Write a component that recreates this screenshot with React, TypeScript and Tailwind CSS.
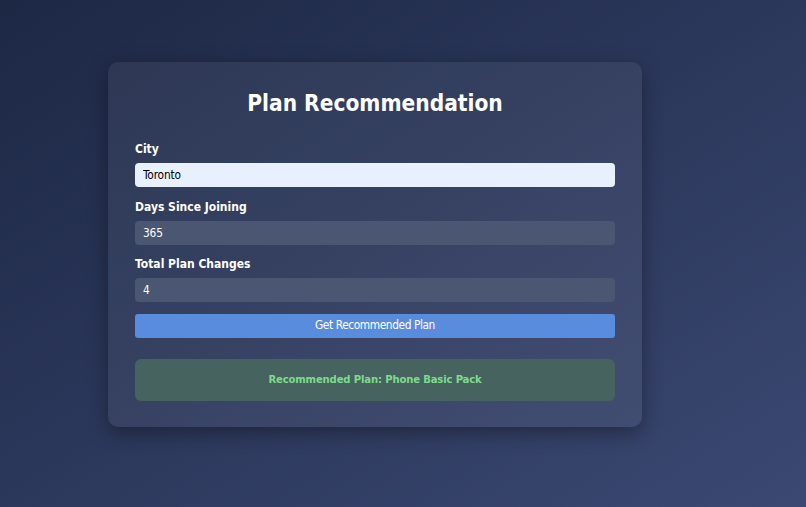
import { useState } from 'react'

/* Plan recommendation form card */

const fieldFont = { fontFamily: '"DejaVu Sans Condensed", "DejaVu Sans", sans-serif' }

export default function App() {
  const [city, setCity] = useState('Toronto')
  const [days, setDays] = useState('365')
  const [changes, setChanges] = useState('4')

  return (
    <div
      className="min-h-screen w-full bg-gradient-to-br from-[#1d2845] to-[#3b4872] pt-[62px] pl-[108px]"
      style={{ fontFamily: '"DejaVu Sans Condensed", "DejaVu Sans", Verdana, sans-serif' }}
    >
      <div className="w-[534px] rounded-[10px] bg-white/[0.06] px-[27px] pt-[27px] pb-[26px] shadow-[0_6px_20px_rgba(0,0,0,0.35)]">
        <h1 className="mb-[25px] text-center text-[22.5px] font-bold leading-[28px] text-white">
          Plan Recommendation
        </h1>

        <label className="mb-[6px] block text-[12px] font-bold leading-[15px] text-white">City</label>
        <input
          value={city}
          onChange={(e) => setCity(e.target.value)}
          className="mb-[12.5px] block h-[24px] w-full rounded-[4px] bg-[#e8f0fe] px-[8px] text-[11.8px] tracking-[-0.15px] text-black outline-none"
          style={fieldFont}
        />

        <label className="mb-[6px] block text-[12px] font-bold leading-[15px] text-white">Days Since Joining</label>
        <input
          value={days}
          onChange={(e) => setDays(e.target.value)}
          className="mb-[12.5px] block h-[24px] w-full rounded-[4px] bg-[#4b5672] px-[8px] text-[11.8px] tracking-[-0.15px] text-white outline-none"
          style={fieldFont}
        />

        <label className="mb-[6px] block text-[12px] font-bold leading-[15px] text-white">Total Plan Changes</label>
        <input
          value={changes}
          onChange={(e) => setChanges(e.target.value)}
          className="mb-[12px] block h-[24px] w-full rounded-[4px] bg-[#4b5672] px-[8px] text-[11.8px] tracking-[-0.15px] text-white outline-none"
          style={fieldFont}
        />

        <button
          className="block h-[24px] w-full rounded-[3px] bg-[#5a8cdd] text-[11.8px] tracking-[-0.4px] text-white"
          style={fieldFont}
        >
          Get Recommended Plan
        </button>

        <div className="mt-[21px] flex h-[42px] items-center justify-center rounded-[6px] bg-[#46635f] text-[11.2px] font-bold tracking-[-0.15px] text-[#7ddc8c]">
          Recommended Plan: Phone Basic Pack
        </div>
      </div>
    </div>
  )
}
